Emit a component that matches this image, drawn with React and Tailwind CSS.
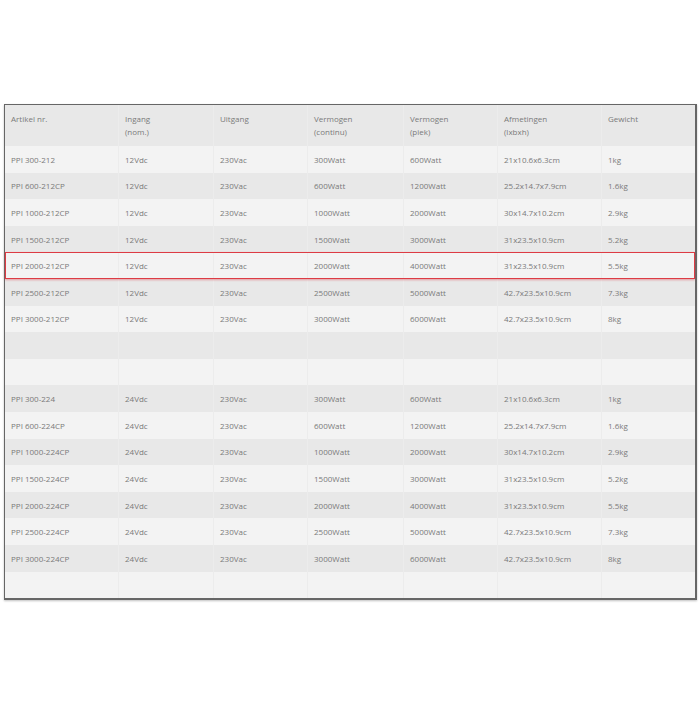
const headers = [
  ['Artikel nr.'],
  ['Ingang', '(nom.)'],
  ['Uitgang'],
  ['Vermogen', '(continu)'],
  ['Vermogen', '(piek)'],
  ['Afmetingen', '(lxbxh)'],
  ['Gewicht'],
]

const sizes = [
  ['300', '300Watt', '600Watt', '21x10.6x6.3cm', '1kg', ''],
  ['600', '600Watt', '1200Watt', '25.2x14.7x7.9cm', '1.6kg', 'CP'],
  ['1000', '1000Watt', '2000Watt', '30x14.7x10.2cm', '2.9kg', 'CP'],
  ['1500', '1500Watt', '3000Watt', '31x23.5x10.9cm', '5.2kg', 'CP'],
  ['2000', '2000Watt', '4000Watt', '31x23.5x10.9cm', '5.5kg', 'CP'],
  ['2500', '2500Watt', '5000Watt', '42.7x23.5x10.9cm', '7.3kg', 'CP'],
  ['3000', '3000Watt', '6000Watt', '42.7x23.5x10.9cm', '8kg', 'CP'],
]

const build = (volt, input) =>
  sizes.map(([n, cont, peak, dim, kg, cp]) => [
    `PPI ${n}-2${volt}${cp}`,
    input,
    '230Vac',
    cont,
    peak,
    dim,
    kg,
  ])

const empty = ['', '', '', '', '', '', '']

const rows = [
  ...build('12', '12Vdc'),
  empty,
  empty,
  ...build('24', '24Vdc'),
  empty,
]

const grid = 'grid grid-cols-[113px_95px_94px_96px_94px_104px_95px]'

function Row({ cells, index }) {
  const light = index % 2 === 0
  const active = index === 4
  return (
    <div
      className={`${grid} h-[26.6px] ${light ? 'bg-[#f3f3f3]' : 'bg-[#e8e8e8]'} ${
        active ? 'outline outline-1 -outline-offset-1 outline-[#dd3b44] shadow-[0_1px_2px_rgba(221,59,68,0.45)] relative' : ''
      }`}
    >
      {cells.map((c, i) => (
        <div
          key={i}
          className={`flex items-center pl-[6px] ${i > 0 ? 'border-l border-[#ececec]' : ''}`}
        >
          {c}
        </div>
      ))}
    </div>
  )
}

export default function App() {
  return (
    <div className="w-[700px] h-[702px] bg-white pt-[104px] pl-[4px]" style={{ fontFamily: '"Open Sans", sans-serif' }}>
      <div className="w-[693px] border border-[#666] border-b-2 border-r-2 shadow-[0_1px_2px_rgba(0,0,0,0.25)] text-[8px] leading-[13px] text-[#7a7a7a]">
        <div className={`${grid} h-[41px] bg-[#e8e8e8]`}>
          {headers.map((h, i) => (
            <div key={i} className={`pl-[6px] pt-[7px] ${i > 0 ? 'border-l border-[#ececec]' : ''}`}>
              {h.map((line, j) => (
                <div key={j}>{line}</div>
              ))}
            </div>
          ))}
        </div>
        {rows.map((r, i) => (
          <Row key={i} cells={r} index={i} />
        ))}
      </div>
    </div>
  )
}
